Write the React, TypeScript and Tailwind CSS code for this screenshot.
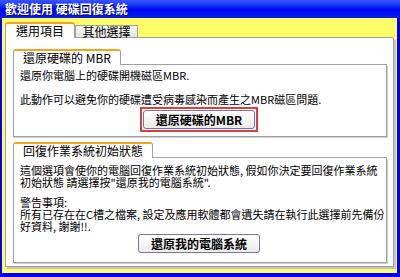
const font = { fontFamily: '"Noto Sans CJK TC", "Noto Sans", sans-serif' };

function GroupTab({ title }: { title: string }) {
  return (
    <div className="flex h-[16px] items-stretch">
      <div className="flex items-center rounded-t-[3px] border-x border-t-2 border-x-[#a0a0a0] border-t-[#f7a21c] bg-white px-[9px] text-[12px] text-black">
        {title}
      </div>
      <div className="flex-1 border-b border-[#a0a0a0]" />
    </div>
  );
}

function XpButton({ label, focused }: { label: string; focused?: boolean }) {
  const btn = (
    <div className="flex h-[19px] items-center justify-center rounded-[3px] border border-[#7474b0] bg-gradient-to-b from-white to-[#ecebe6] px-[12px] text-[12px] font-semibold text-black">
      {label}
    </div>
  );
  if (!focused) return btn;
  return <div className="border-2 border-[#e53a3a] p-[1px]">{btn}</div>;
}

export default function App() {
  return (
    <div className="flex h-[277px] w-[400px] flex-col bg-[#0000f0]" style={font}>
      {/* Title bar */}
      <div className="flex h-[18px] shrink-0 items-center bg-gradient-to-b from-[#3a55ff] via-[#0000f4] to-[#0a1ee8] pl-[5px] text-[12px] font-semibold text-white [text-shadow:1px_1px_0_#000080]">
        歡迎使用 硬碟回復系統
      </div>

      {/* Body */}
      <div className="flex flex-1 flex-col border-b-4 border-l-2 border-r-[3px] border-[#0000f0] bg-[#fdfd68] pb-[6px] pl-[3px] pr-[3px] pt-[4px]">
        {/* Tabs */}
        <div className="flex h-[16px] shrink-0 items-end">
          <div className="flex h-[16px] w-[70px] items-center justify-center rounded-t-[3px] border-x border-t-2 border-x-[#a0a0a0] border-t-[#f7a21c] bg-white text-[12px] text-black">
            選用項目
          </div>
          <div className="flex h-[13px] w-[63px] items-center justify-center border border-[#a0a0a0] bg-gradient-to-b from-[#fbfbf8] to-[#e4e2d8] text-[12px] text-black">
            其他選擇
          </div>
          <div className="h-[13px] flex-1 border-b border-r-2 border-[#a0a0a0] border-r-transparent" />
        </div>

        {/* Panel */}
        <div className="flex flex-1 flex-col border-x border-b border-[#a0a0a0] bg-white pb-[3px] pl-[7px] pr-[6px] pt-[11px] shadow-[2px_2px_0_#c4c4c4]">
          {/* Group 1 */}
          <GroupTab title="還原硬碟的 MBR" />
          <div className="flex h-[72px] flex-col border-x border-b border-[#a0a0a0] pt-[3px] text-[11px] text-black shadow-[1px_1px_0_#d0d0d0]">
            <div className="h-[14px] pl-[6px] leading-[14px]">還原你電腦上的硬碟開機磁區MBR.</div>
            <div className="mt-[10px] h-[14px] pl-[6px] leading-[14px]">此動作可以避免你的硬碟遭受病毒感染而產生之MBR磁區問題.</div>
            <div className="mt-[1px] flex justify-center pr-[2px]">
              <XpButton label="還原硬碟的MBR" focused />
            </div>
          </div>

          {/* Group 2 */}
          <div className="mt-[5px]">
            <GroupTab title="回復作業系統初始狀態" />
          </div>
          <div className="flex flex-1 flex-col border-x border-b border-[#a0a0a0] pt-[6px] text-[11px] leading-[12px] text-black shadow-[1px_1px_0_#d0d0d0]">
            <div className="pl-[6px]">
              <div className="h-[12px]">這個選項會使你的電腦回復作業系統初始狀態, 假如你決定要回復作業系統</div>
              <div className="h-[12px]">初始狀態 請選擇按"還原我的電腦系統".</div>
              <div className="h-[8px]" />
              <div className="h-[12px]">警告事項:</div>
              <div className="h-[12px]">所有已存在在C槽之檔案, 設定及應用軟體都會遺失請在執行此選擇前先備份</div>
              <div className="h-[12px]">好資料, 謝謝!!.</div>
            </div>
            <div className="mt-[2px] flex justify-center pr-[2px]">
              <XpButton label="還原我的電腦系統" />
            </div>
          </div>
        </div>
      </div>
    </div>
  );
}
